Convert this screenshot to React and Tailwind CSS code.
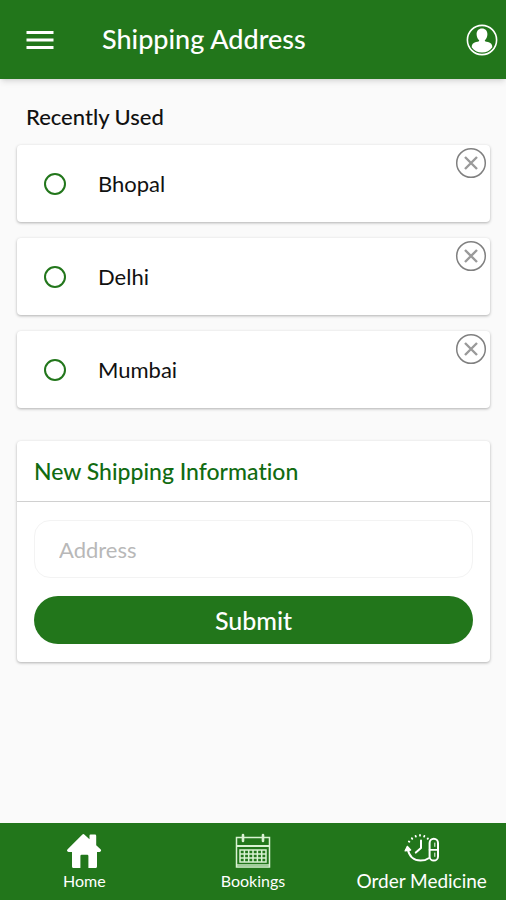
import { useState } from 'react';

const HomeIcon = () => (
    <svg viewBox="0 0 36 36" className="w-9 h-9" fill="currentColor" aria-hidden="true">
        <path d="M18 1.2 L23.5 6.2 V2.6 Q23.5 1.6 24.5 1.6 H29 Q30.2 1.6 30.2 2.8 V12.2 L34.8 16.6 Q35.8 18.6 33.6 19 H31 V33.4 Q31 35 29.4 35 H22.4 V23 Q22.4 21.8 21.2 21.8 H15.6 Q14.4 21.8 14.4 23 V35 H7.6 Q6 35 6 33.4 V19 H2.6 Q0.2 18.6 1.4 16.6 L16.4 1.6 Q17.2 0.6 18 1.2 Z" />
    </svg>
);

const CalendarIcon = () => (
    <svg viewBox="0 0 36 36" className="w-9 h-9" fill="none" stroke="#d9f2d3" aria-hidden="true">
        <path d="M1.5 4.5 H34.5 V34 H1.5 Z" strokeWidth="1.5" />
        <path d="M1.5 13 H34.5" strokeWidth="1.8" />
        <path d="M2 32 H34" strokeWidth="1.4" />
        <path d="M8 2 V8 M28 2 V8" strokeWidth="2.6" strokeLinecap="round" />
        <path d="M5 17 H31 V29 H5 Z M5 21 H31 M5 25 H31 M9.4 17 V29 M13.7 17 V29 M18 17 V29 M22.4 17 V29 M26.7 17 V29" strokeWidth="1.5" />
    </svg>
);

const MedicineIcon = () => (
    <svg viewBox="0 0 36 30" className="w-9 h-[30px]" fill="none" stroke="currentColor" strokeLinecap="round" strokeLinejoin="round" aria-hidden="true">
        {/* Clock */}
        <path d="M3.8 16 C5 23.4 10 27.6 16.5 27.6 C20 27.6 22.4 26.8 24.6 25.2" strokeWidth="2" />
        <path d="M1.2 17.8 L3.4 13.4 L6.6 17 Z" fill="currentColor" strokeWidth="1.4" />
        <path d="M4.8 8.4 L5.4 8.8 M7.8 5.2 L8.3 5.8 M11.6 2.9 L11.9 3.6 M16 2 V2.7 M20.4 2.9 L20.1 3.6 M24 5.4 L23.6 5.9" strokeWidth="1.8" />
        <path d="M17 7.4 V15 L11.8 19.6" strokeWidth="2" />
        {/* Capsule */}
        <rect x="25.6" y="5.8" width="8.4" height="21.8" rx="4.2" strokeWidth="2" />
        <path d="M25.6 16.8 H34" strokeWidth="1.8" />
        <path d="M30.8 10 V13.4 M30.8 20 V23.4" strokeWidth="1" />
    </svg>
);

const UserIcon = () => (
    <svg viewBox="0 0 32 32" className="w-8 h-8" fill="none" aria-hidden="true">
        <circle cx="16" cy="16" r="14.6" stroke="currentColor" strokeWidth="1.6" />
        <path d="M16 4.4 C19.4 4.4 21.4 6.8 21.4 10.2 C21.4 12.8 20.3 15 18.8 16.2 C18.8 17.6 19.6 17.6 22 18 C24.8 18.6 26.4 20.2 26.3 23.2 C24 26.8 20.4 28.6 16 28.6 C11.6 28.6 8 26.8 5.7 23.2 C5.6 20.2 7.2 18.6 10 18 C12.4 17.6 13.2 17.6 13.2 16.2 C11.7 15 10.6 12.8 10.6 10.2 C10.6 6.8 12.6 4.4 16 4.4 Z" fill="currentColor" />
    </svg>
);

const CloseIcon = () => (
    <svg viewBox="0 0 32 32" className="w-8 h-8" fill="none" aria-hidden="true">
        <circle cx="16" cy="16" r="14.3" stroke="#808080" strokeWidth="1.5" />
        <path d="M10 10 L22 22 M22 10 L10 22" stroke="#9a9a9a" strokeWidth="2.4" />
    </svg>
);

const App = () => {
    const [addresses, setAddresses] = useState(['Bhopal', 'Delhi', 'Mumbai']);
    const [selected, setSelected] = useState('');
    const [address, setAddress] = useState('');

    const handleRemove = (name) => {
        setAddresses(addresses.filter((item) => item !== name));
    };

    const handleSubmit = (e) => {
        e.preventDefault();
        if (!address.trim()) return;
        setAddresses([...addresses, address.trim()]);
        setAddress('');
    };

    return (
        <div className="min-h-screen flex flex-col bg-[#fafafa] text-[#111111] font-['Lato',sans-serif] [font-variant-ligatures:none]">
            {/* Header */}
            <header className="flex items-center h-[79px] pl-6 pr-2 bg-[#22761b] text-white shadow-md">
                <button type="button" aria-label="Open menu" className="w-8 h-8 flex items-center justify-center">
                    <svg viewBox="0 0 28 20" className="w-7 h-5" fill="currentColor" aria-hidden="true">
                        <path d="M0.5 1 H27.5 V4 H0.5 Z M0.5 8.5 H27.5 V11.5 H0.5 Z M0.5 16 H27.5 V19 H0.5 Z" />
                    </svg>
                </button>
                <h1 className="flex-1 ml-[46px] pb-[2px] text-[27px] leading-8 font-medium">Shipping Address</h1>
                <button type="button" aria-label="Profile">
                    <UserIcon />
                </button>
            </header>

            <main className="flex-1 pl-[17px] pr-4 pt-[22px] pb-8">
                {/* Recent addresses */}
                <h2 className="px-[9px] mb-3 text-[22px] leading-8 font-medium">Recently Used</h2>
                <ul className="space-y-4">
                    {addresses.map((name) => (
                        <li key={name} className="flex items-start pt-[2px] pb-[6px] pr-[3px] pl-[27px] bg-white rounded-sm shadow-[0_1px_3px_rgba(0,0,0,0.3)]">
                            <label className="flex-1 flex items-center h-[69px] pt-1 text-[22px]">
                                <input
                                    type="radio"
                                    name="address"
                                    value={name}
                                    checked={selected === name}
                                    onChange={() => setSelected(name)}
                                    className="appearance-none w-[22px] h-[22px] mr-8 rounded-full border-2 border-[#22761b] checked:bg-[#22761b]"
                                />
                                {name}
                            </label>
                            <button type="button" aria-label={`Remove ${name}`} onClick={() => handleRemove(name)}>
                                <CloseIcon />
                            </button>
                        </li>
                    ))}
                </ul>

                {/* New address form */}
                <section className="mt-[33px] bg-white rounded-sm shadow-[0_1px_3px_rgba(0,0,0,0.3)]">
                    <h2 className="px-[17px] py-[14px] border-b border-[#d0d0d0] text-[23px] leading-8 font-medium text-[#116b11]">
                        New Shipping Information
                    </h2>
                    <form onSubmit={handleSubmit} className="px-[17px] py-[18px] space-y-[18px]">
                        <input
                            type="text"
                            aria-label="Address"
                            placeholder="Address"
                            value={address}
                            onChange={(e) => setAddress(e.target.value)}
                            className="block w-full h-[58px] px-6 rounded-2xl border border-[#f3f3f3] text-[22px] placeholder:text-[#b8b8b8] outline-none"
                        />
                        <button type="submit" className="block w-full h-12 rounded-full bg-[#22761b] text-white text-[25px] leading-8 font-medium">
                            Submit
                        </button>
                    </form>
                </section>
            </main>

            {/* Bottom navigation */}
            <nav className="grid grid-cols-3 h-[77px] bg-[#22761b] text-white">
                <a href="#home" className="flex flex-col items-center pt-[10px]">
                    <HomeIcon />
                    <span className="mt-[2px] text-base leading-5">Home</span>
                </a>
                <a href="#bookings" className="flex flex-col items-center pt-[10px]">
                    <CalendarIcon />
                    <span className="mt-[2px] text-base leading-5">Bookings</span>
                </a>
                <a href="#order-medicine" className="flex flex-col items-center pt-[10px] whitespace-nowrap">
                    <MedicineIcon />
                    <span className="mt-[6px] text-[19px] leading-6">Order Medicine</span>
                </a>
            </nav>
        </div>
    );
};

export default App;
